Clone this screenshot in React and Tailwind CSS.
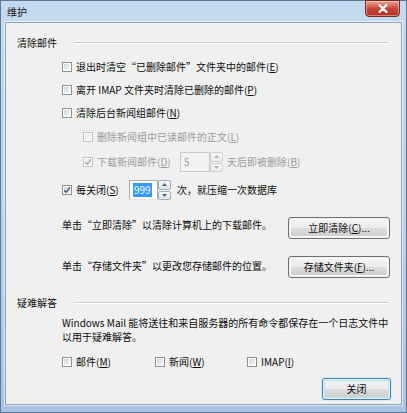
import React from 'react';

const font = "font-['Noto_Sans_CJK_SC','Noto_Sans',sans-serif]";

// Vista-style checkbox, drawn at the screenshot's (scaled) size
const Check = ({ checked = false, disabled = false }) => (
  <span
    className={`w-[10px] h-[10px] shrink-0 border p-px bg-white ${
      disabled ? 'border-[#c2c2c2]' : 'border-[#8e8f8f]'
    }`}
  >
    <span
      className={`relative block w-full h-full bg-gradient-to-br ${
        disabled ? 'from-[#e8e8e8] to-[#f7f7f7]' : 'from-[#d3d5d8] to-[#f8f8f8]'
      }`}
    >
      {checked && (
        <svg viewBox="0 0 8 8" className="absolute -left-px -top-px w-[8px] h-[8px]">
          <path
            d="M1.2 4.2 L3.2 6.2 L7 1.4"
            fill="none"
            stroke={disabled ? '#a8a8a8' : '#3b4f7e'}
            strokeWidth="1.4"
          />
        </svg>
      )}
    </span>
  </span>
);

const U = ({ children }) => <span className="underline underline-offset-1">{children}</span>;

const Row = ({ h, indent = 'pl-[56px]', children }) => (
  <div className={`flex items-center gap-[4px] ${indent} ${h}`}>{children}</div>
);

const SectionHeader = ({ title, h }) => (
  <div className={`flex items-center pl-[11px] pr-[12px] ${h}`}>
    <span className="w-[57px]">{title}</span>
    <div className="flex-1 flex flex-col">
      <div className="h-px bg-[#cfcfcf]" />
      <div className="h-px bg-white" />
    </div>
  </div>
);

const Arrow = ({ up, disabled }) => (
  <svg viewBox="0 0 5 3" className="w-[5px] h-[3px]">
    <path d={up ? 'M0 3 L2.5 0 L5 3 Z' : 'M0 0 L2.5 3 L5 0 Z'} fill={disabled ? '#b4b4b4' : '#4d6185'} />
  </svg>
);

const Spinner = ({ value, disabled = false, selected = false, w }) => (
  <div className="flex h-[20px]">
    <div
      className={`${w} h-full border flex items-center pl-[3px] ${
        disabled ? 'border-[#c9cbce] bg-[#f2f2f2] text-[#9a9a9a]' : 'border-[#abadb3] border-b-[#e3e9ef] bg-white'
      }`}
    >
      <span className={selected ? 'bg-[#3399ff] text-white leading-[14px] px-px' : 'leading-[14px]'}>{value}</span>
    </div>
    <div className="w-[13px] h-full flex flex-col gap-px">
      {[true, false].map((up) => (
        <div
          key={up ? 'u' : 'd'}
          className={`flex-1 border rounded-[2px] flex items-center justify-center bg-gradient-to-b ${
            disabled ? 'border-[#d0d0d0] from-[#f5f5f5] to-[#ececec]' : 'border-[#a5acb5] from-[#f6f9fc] to-[#dde4ec]'
          }`}
        >
          <Arrow up={up} disabled={disabled} />
        </div>
      ))}
    </div>
  </div>
);

const Button = ({ children, primary = false, w = 'w-[102px]' }) => (
  <div
    className={`${w} h-[22px] rounded-[3px] border p-px ${
      primary ? 'border-[#3c7fb1] shadow-[0_0_2px_#9fd4f5]' : 'border-[#707070]'
    }`}
  >
    <div
      className={`h-full rounded-[2px] flex items-center justify-center border ${
        primary ? 'border-[#aee4fb]' : 'border-[#fbfbfb]'
      } bg-[linear-gradient(#f2f2f2_0%,#ebebeb_50%,#dddddd_50%,#cfcfcf_100%)]`}
    >
      {children}
    </div>
  </div>
);

export default function App() {
  return (
    <div
      className={`${font} text-[10px] leading-[14px] text-[#0c0c0c] w-[407px] h-[413px] relative bg-gradient-to-b from-[#c5d9ef] via-[#bcd1ea] to-[#a9c3e2] border border-[#5f7897] flex flex-col`}
    >
      {/* title bar */}
      <div className="h-[21px] flex items-center pl-[6px] text-[#1b1b1b] shrink-0">维护</div>

      {/* close button */}
      <div className="absolute right-[6px] top-[-1px] w-[35px] h-[17px] rounded-b-[4px] border border-[#6f2a22] bg-gradient-to-b from-[#e9a597] via-[#c9453a] to-[#b52d22] flex items-center justify-center shadow-[inset_0_0_0_1px_rgba(255,220,210,0.5)]">
        <svg viewBox="0 0 10 9" className="w-[10px] h-[9px]">
          <path d="M1.5 1 L8.5 8 M8.5 1 L1.5 8" stroke="#fff" strokeWidth="2.2" strokeLinecap="round" />
        </svg>
      </div>

      {/* client area */}
      <div className="mx-[4px] border border-[#8da0b9] shadow-[0_0_0_1px_rgba(255,255,255,0.6)] bg-[#f0f0f0] h-[383px] flex flex-col pt-[8px]">
        <SectionHeader title="清除邮件" h="h-[24px]" />

        <Row h="h-[23px]">
          <Check />
          <span>退出时清空“已删除邮件”文件夹中的邮件(<U>E</U>)</span>
        </Row>
        <Row h="h-[23px]">
          <Check />
          <span>离开 IMAP 文件夹时清除已删除的邮件(<U>P</U>)</span>
        </Row>
        <Row h="h-[24px]">
          <Check />
          <span>清除后台新闻组邮件(<U>N</U>)</span>
        </Row>
        <Row h="h-[24px]" indent="pl-[77px]">
          <Check disabled />
          <span className="text-[#9c9c9c]">删除新闻组中已读邮件的正文(<U>L</U>)</span>
        </Row>
        <Row h="h-[26px]" indent="pl-[77px]">
          <Check checked disabled />
          <span className="text-[#9c9c9c] w-[79px]">下载新闻邮件(<U>D</U>)</span>
          <Spinner value="5" disabled w="w-[30px]" />
          <span className="text-[#9c9c9c]">天后即被删除(<U>B</U>)</span>
        </Row>
        <Row h="h-[30px]">
          <Check checked />
          <span className="w-[49px]">每关闭(<U>S</U>)</span>
          <Spinner value="999" selected w="w-[29px]" />
          <span className="ml-[2px]">次，就压缩一次数据库</span>
        </Row>

        <div className="flex items-start justify-between pl-[56px] pr-[11px] mt-[12px]">
          <span className="pt-px">单击“立即清除”以清除计算机上的下载邮件。</span>
          <Button>
            <span>立即清除(<U>C</U>)...</span>
          </Button>
        </div>
        <div className="flex items-center justify-between pl-[56px] pr-[11px] mt-[17px]">
          <span className="-mt-[3px]">单击“存储文件夹”以更改您存储邮件的位置。</span>
          <Button>
            <span>存储文件夹(<U>F</U>)...</span>
          </Button>
        </div>

        <div className="mt-[13px]">
          <SectionHeader title="疑难解答" h="h-[24px]" />
        </div>
        <p className="pl-[56px] pr-[10px] mt-px">
          Windows Mail 能将送往和来自服务器的所有命令都保存在一个日志文件中
          <br />
          以用于疑难解答。
        </p>

        <div className="flex items-center h-[20px] mt-[8px] pl-[56px]">
          <div className="flex items-center gap-[4px] w-[93px]">
            <Check />
            <span>邮件(<U>M</U>)</span>
          </div>
          <div className="flex items-center gap-[4px] w-[92px]">
            <Check />
            <span>新闻(<U>W</U>)</span>
          </div>
          <div className="flex items-center gap-[4px]">
            <Check />
            <span>IMAP(<U>I</U>)</span>
          </div>
        </div>

        <div className="flex justify-end pr-[10px] mt-[6px]">
          <Button primary w="w-[69px]">
            <span>关闭</span>
          </Button>
        </div>
      </div>
    </div>
  );
}
